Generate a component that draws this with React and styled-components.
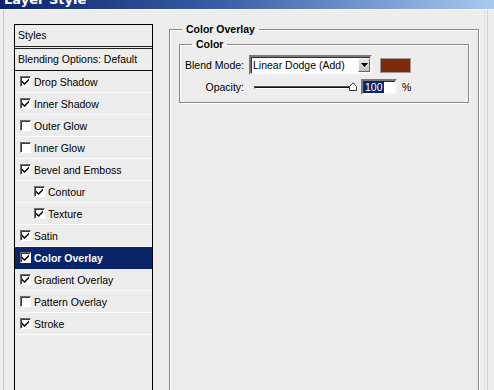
import styled, { createGlobalStyle } from 'styled-components';

const GlobalStyle = createGlobalStyle`
  html, body {
    margin: 0;
    padding: 0;
    background: #ededed;
    overflow: hidden;
  }
  body {
    font-family: 'Liberation Sans', Arial, sans-serif;
    font-size: 10.5px;
    color: #000;
  }
`;

const effects = [
  { name: 'Drop Shadow', checked: true },
  { name: 'Inner Shadow', checked: true },
  { name: 'Outer Glow', checked: false },
  { name: 'Inner Glow', checked: false },
  { name: 'Bevel and Emboss', checked: true },
  { name: 'Contour', checked: true, indent: true },
  { name: 'Texture', checked: true, indent: true },
  { name: 'Satin', checked: true },
  { name: 'Color Overlay', checked: true, selected: true },
  { name: 'Gradient Overlay', checked: true },
  { name: 'Pattern Overlay', checked: false },
  { name: 'Stroke', checked: true },
];

function CheckBox({ checked }) {
  return (
    <Box>
      {checked && (
        <svg width="7" height="7" viewBox="0 0 7 7">
          <path d="M0 2.5 L2.5 5 L7 0.5 L7 2.5 L2.5 7 L0 4.5 Z" fill="#000" />
        </svg>
      )}
    </Box>
  );
}

function App() {
  return (
    <Window>
      <GlobalStyle />
      <TitleBar>
        <Title>Layer Style</Title>
      </TitleBar>
      <Body>
        <Sidebar>
          <StyleList>
            <HeaderRow>Styles</HeaderRow>
            <OptionsRow>Blending Options: Default</OptionsRow>
            {effects.map(effect => (
              <EffectRow key={effect.name} $selected={effect.selected} $indent={effect.indent}>
                <CheckBox checked={effect.checked} />
                <span>{effect.name}</span>
              </EffectRow>
            ))}
          </StyleList>
        </Sidebar>
        <Panel>
          <Group>
            <Legend>Color Overlay</Legend>
            <SubGroup>
              <SubLegend>Color</SubLegend>
              <FieldRow>
                <FieldLabel>Blend Mode:</FieldLabel>
                <Select>
                  <SelectText>Linear Dodge (Add)</SelectText>
                  <DropButton>
                    <svg width="7" height="4" viewBox="0 0 7 4">
                      <path d="M0 0 H7 L3.5 4 Z" fill="#000" />
                    </svg>
                  </DropButton>
                </Select>
                <Swatch />
              </FieldRow>
              <FieldRow $slim>
                <FieldLabel>Opacity:</FieldLabel>
                <Slider>
                  <Track />
                  <Thumb>
                    <svg width="8" height="9" viewBox="0 0 8 9">
                      <path d="M0.5 8.5 V4.5 L4 0.8 L7.5 4.5 V8.5 Z" fill="#fff" stroke="#333" />
                    </svg>
                  </Thumb>
                </Slider>
                <NumberInput>
                  <Selected>100</Selected>
                </NumberInput>
                <Unit>%</Unit>
              </FieldRow>
            </SubGroup>
          </Group>
        </Panel>
        <RightEdge />
      </Body>
    </Window>
  );
}

export default App;

const Window = styled.div`
  width: 494px;
  height: 390px;
  display: flex;
  flex-direction: column;
  overflow: hidden;
`;

const TitleBar = styled.div`
  height: 9px;
  overflow: hidden;
  background: linear-gradient(to right, #0a246a 0%, #3a5ea8 45%, #a6caf0 100%);
  border-bottom: 1px solid #f6f8fb;
`;

const Title = styled.div`
  margin: -7px 0 0 4px;
  font-family: Tahoma, 'DejaVu Sans', sans-serif;
  font-weight: bold;
  font-size: 13px;
  line-height: 14px;
  color: #fff;
`;

const Body = styled.div`
  flex: 1;
  display: flex;
  padding-left: 3px;
  overflow: hidden;
`;

const Sidebar = styled.div`
  border-left: 1px solid #c6c6c6;
  padding: 14px 0 0 10px;
`;

const StyleList = styled.div`
  width: 137px;
  height: 420px;
  border: 1px solid #000;
  background: #ededed;
`;

const HeaderRow = styled.div`
  height: 21px;
  line-height: 21px;
  padding-left: 3px;
  border-bottom: 3px double #222;
`;

const OptionsRow = styled.div`
  height: 21px;
  line-height: 21px;
  padding-left: 3px;
  border-bottom: 1px solid #111;
`;

const EffectRow = styled.div`
  height: 21px;
  display: flex;
  align-items: center;
  gap: 3px;
  padding-left: ${p => (p.$indent ? '19px' : '5px')};
  border-bottom: 1px solid ${p => (p.$selected ? '#0a246a' : '#fafafa')};
  background: ${p => (p.$selected ? '#0a246a' : '#ececec')};
  color: ${p => (p.$selected ? '#fff' : '#000')};
  font-weight: ${p => (p.$selected ? 'bold' : 'normal')};
`;

const Box = styled.span`
  width: 9px;
  height: 9px;
  display: flex;
  align-items: center;
  justify-content: center;
  background: #fff;
  border: 1px solid;
  border-color: #6e6e6e #fff #fff #6e6e6e;
  box-shadow: inset 1px 1px 0 #3a3a3a;
  flex-shrink: 0;
`;

const Panel = styled.div`
  padding: 13px 0 0 16px;
`;

const Group = styled.fieldset`
  margin: 0;
  width: 290px;
  height: 420px;
  padding: 0 9px;
  border: 1px solid #888;
  box-shadow: 1px 1px 0 #fff, inset 1px 1px 0 #fff;
`;

const Legend = styled.legend`
  margin-left: 3px;
  padding: 0 4px;
  font-weight: bold;
  line-height: 13px;
`;

const SubGroup = styled.fieldset`
  margin: 2px 0 0;
  padding: 4px 7px 6px 5px;
  border: 1px solid #888;
  box-shadow: 1px 1px 0 #fff, inset 1px 1px 0 #fff;
`;

const SubLegend = styled.legend`
  margin-left: 7px;
  padding: 0 4px;
  font-weight: bold;
  line-height: 13px;
`;

const FieldRow = styled.div`
  display: flex;
  align-items: center;
  height: ${p => (p.$slim ? '18px' : '20px')};
  margin-bottom: ${p => (p.$slim ? '0' : '3px')};
`;

const FieldLabel = styled.span`
  width: 59px;
  text-align: right;
  white-space: nowrap;
  margin-right: 5px;
  flex-shrink: 0;
`;

const Select = styled.div`
  width: 119px;
  height: 16px;
  display: flex;
  align-items: center;
  background: #fff;
  border: 2px solid;
  border-color: #7a7a7a #f4f4f4 #f4f4f4 #7a7a7a;
  box-shadow: inset 1px 1px 0 #303030;
`;

const SelectText = styled.span`
  flex: 1;
  padding-left: 2px;
  white-space: nowrap;
`;

const DropButton = styled.span`
  width: 12px;
  height: 14px;
  display: flex;
  align-items: center;
  justify-content: center;
  background: linear-gradient(#e8e8e8, #c4c4c4);
  border: 1px solid;
  border-color: #f6f6f6 #666 #666 #f6f6f6;
  box-sizing: border-box;
`;

const Swatch = styled.span`
  width: 29px;
  height: 13px;
  margin-left: 8px;
  background: #7f2a0c;
  border: 1px solid #a09a98;
`;

const Slider = styled.div`
  position: relative;
  width: 101px;
  height: 14px;
  margin-left: 5px;
  display: flex;
  align-items: center;
`;

const Track = styled.div`
  width: 100%;
  height: 1px;
  border: 1px solid;
  border-color: #555 #fff #fff #555;
  background: #111;
`;

const Thumb = styled.div`
  position: absolute;
  left: 95px;
  top: 2px;
  display: flex;
`;

const NumberInput = styled.div`
  width: 32px;
  height: 12px;
  margin-left: 6px;
  display: flex;
  align-items: center;
  background: #fff;
  border: 2px solid;
  border-color: #7a7a7a #f4f4f4 #f4f4f4 #7a7a7a;
  box-shadow: inset 1px 1px 0 #303030;
`;

const Selected = styled.span`
  margin-left: 1px;
  padding: 0 1px;
  background: #0a246a;
  color: #fff;
  line-height: 12px;
`;

const Unit = styled.span`
  margin-left: 5px;
`;

const RightEdge = styled.div`
  margin-left: 5px;
  width: 2px;
  border-left: 1px solid #e2e2e2;
  border-right: 1px solid #d6d6d6;
`;
